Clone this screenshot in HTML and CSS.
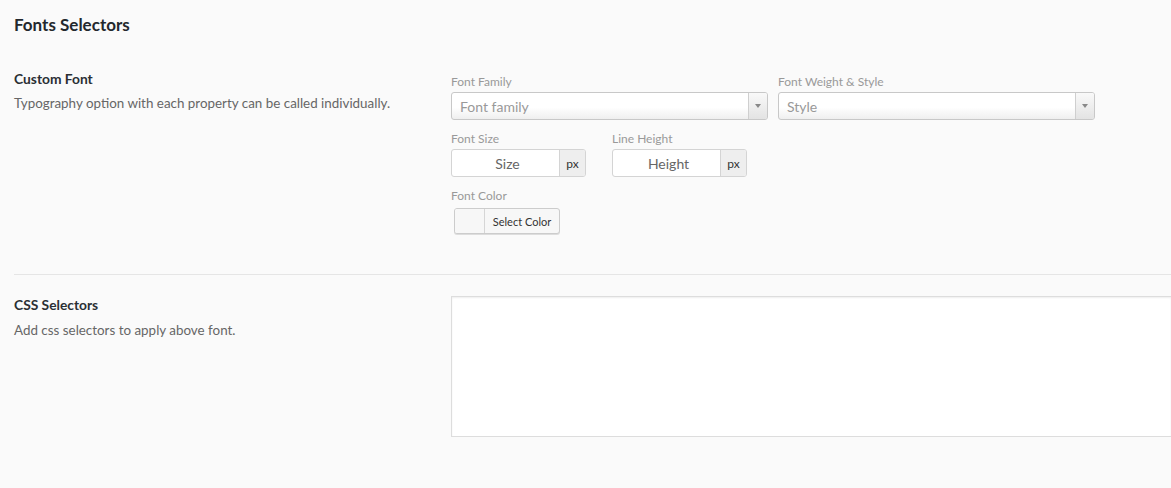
FILE: index.html
```html
<!DOCTYPE html>
<html>
<head>
<meta charset="utf-8">
<link rel="stylesheet" href="styles.css">
</head>
<body>
<div class="page">
  <h2 class="title">Fonts Selectors</h2>

  <div class="row row-first">
    <div class="desc">
      <div class="desc-title">Custom Font</div>
      <div class="desc-text">Typography option with each property can be called individually.</div>
    </div>
    <div class="fields">
      <div class="line">
        <div class="field field-select">
          <div class="label">Font Family</div>
          <div class="select">
            <span class="select-text">Font family</span>
            <span class="select-arrow"><span class="tri"></span></span>
          </div>
        </div>
        <div class="field field-select">
          <div class="label">Font Weight &amp; Style</div>
          <div class="select">
            <span class="select-text">Style</span>
            <span class="select-arrow"><span class="tri"></span></span>
          </div>
        </div>
      </div>
      <div class="line line-gap">
        <div class="field field-num">
          <div class="label">Font Size</div>
          <div class="num">
            <span class="num-text">Size</span>
            <span class="addon">px</span>
          </div>
        </div>
        <div class="field field-num">
          <div class="label">Line Height</div>
          <div class="num">
            <span class="num-text">Height</span>
            <span class="addon">px</span>
          </div>
        </div>
      </div>
      <div class="line line-gap">
        <div class="field">
          <div class="label label-color">Font Color</div>
          <div class="color-btn">
            <span class="swatch"></span>
            <span class="color-text">Select Color</span>
          </div>
        </div>
      </div>
    </div>
  </div>

  <div class="row row-second">
    <div class="desc">
      <div class="desc-title">CSS Selectors</div>
      <div class="desc-text">Add css selectors to apply above font.</div>
    </div>
    <div class="fields">
      <div class="textarea"></div>
    </div>
  </div>
</div>
</body>
</html>
```

FILE: styles.css
```css
html, body {
  margin: 0;
  padding: 0;
  background: #fafafa;
  overflow: hidden;
}
body {
  font-family: "Lato", "Liberation Sans", sans-serif;
  color: #23282d;
  width: 1171px;
  height: 488px;
}
.page {
  padding-left: 14px;
}
.title {
  margin: 0;
  padding-top: 14px;
  font-size: 17px;
  line-height: 21px;
  font-weight: 700;
  color: #23282d;
}
.row {
  display: grid;
  grid-template-columns: 437px 1fr;
}
.row-first {
  padding-top: 35px;
  padding-bottom: 40px;
}
.row-second {
  border-top: 1px solid #e5e5e5;
  padding-top: 21px;
  padding-bottom: 30px;
}
.desc-title {
  font-size: 13.8px;
  line-height: 18px;
  font-weight: 700;
  color: #2a2f34;
}
.desc-text {
  margin-top: 6px;
  font-size: 13.4px;
  line-height: 18px;
  color: #666;
}
.row-second .desc-text {
  margin-top: 7px;
}
.fields {
  padding-top: 4px;
  min-width: 0;
}
.row-second .fields {
  padding-top: 0;
}
.line {
  display: flex;
}
.line-gap {
  margin-top: 11px;
}
.field-select {
  width: 317px;
  margin-right: 10px;
}
.field-num {
  width: 135px;
  margin-right: 26px;
}
.label {
  font-size: 12px;
  line-height: 16px;
  color: #999;
  margin-bottom: 2px;
}
.label-color {
  margin-bottom: 4px;
}
.select {
  display: flex;
  height: 28px;
  box-sizing: border-box;
  border: 1px solid #c8c8c8;
  border-radius: 3px;
  background: linear-gradient(#ffffff 0%, #ffffff 55%, #efefef 100%);
  overflow: hidden;
}
.select-text {
  flex: 1;
  padding-left: 8px;
  padding-top: 1px;
  font-size: 14px;
  line-height: 26px;
  color: #999;
}
.select-arrow {
  width: 18px;
  border-left: 1px solid #cfcfcf;
  background: linear-gradient(#f9f9f9, #e3e3e3);
  display: flex;
  align-items: center;
  justify-content: center;
}
.tri {
  width: 0;
  height: 0;
  border-left: 3px solid transparent;
  border-right: 3px solid transparent;
  border-top: 4px solid #888;
}
.num {
  display: flex;
  height: 28px;
  box-sizing: border-box;
  border: 1px solid #d4d4d4;
  border-radius: 3px;
  background: #fff;
  overflow: hidden;
}
.num-text {
  flex: 1;
  text-align: center;
  padding-left: 4px;
  padding-top: 1px;
  font-size: 14px;
  line-height: 26px;
  color: #666;
}
.addon {
  width: 25px;
  border-left: 1px solid #d4d4d4;
  background: #eeeeee;
  font-size: 12px;
  line-height: 28px;
  text-align: center;
  color: #333;
}
.color-btn {
  display: flex;
  margin-left: 3px;
  width: 106px;
  height: 26px;
  box-sizing: border-box;
  border: 1px solid #cccccc;
  border-radius: 3px;
  background: #f7f7f7;
  box-shadow: 0 1px 0 #dddddd;
  overflow: hidden;
}
.swatch {
  width: 29px;
  border-right: 1px solid #d6d6d6;
  background: #f7f7f7;
}
.color-text {
  flex: 1;
  text-align: center;
  padding-top: 1px;
  font-size: 11px;
  line-height: 24px;
  color: #333;
}
.textarea {
  width: 100%;
  height: 141px;
  box-sizing: border-box;
  border: 1px solid #dddddd;
  border-right: 0;
  background: #fff;
  box-shadow: inset 0 1px 2px rgba(0, 0, 0, 0.07);
}
```
